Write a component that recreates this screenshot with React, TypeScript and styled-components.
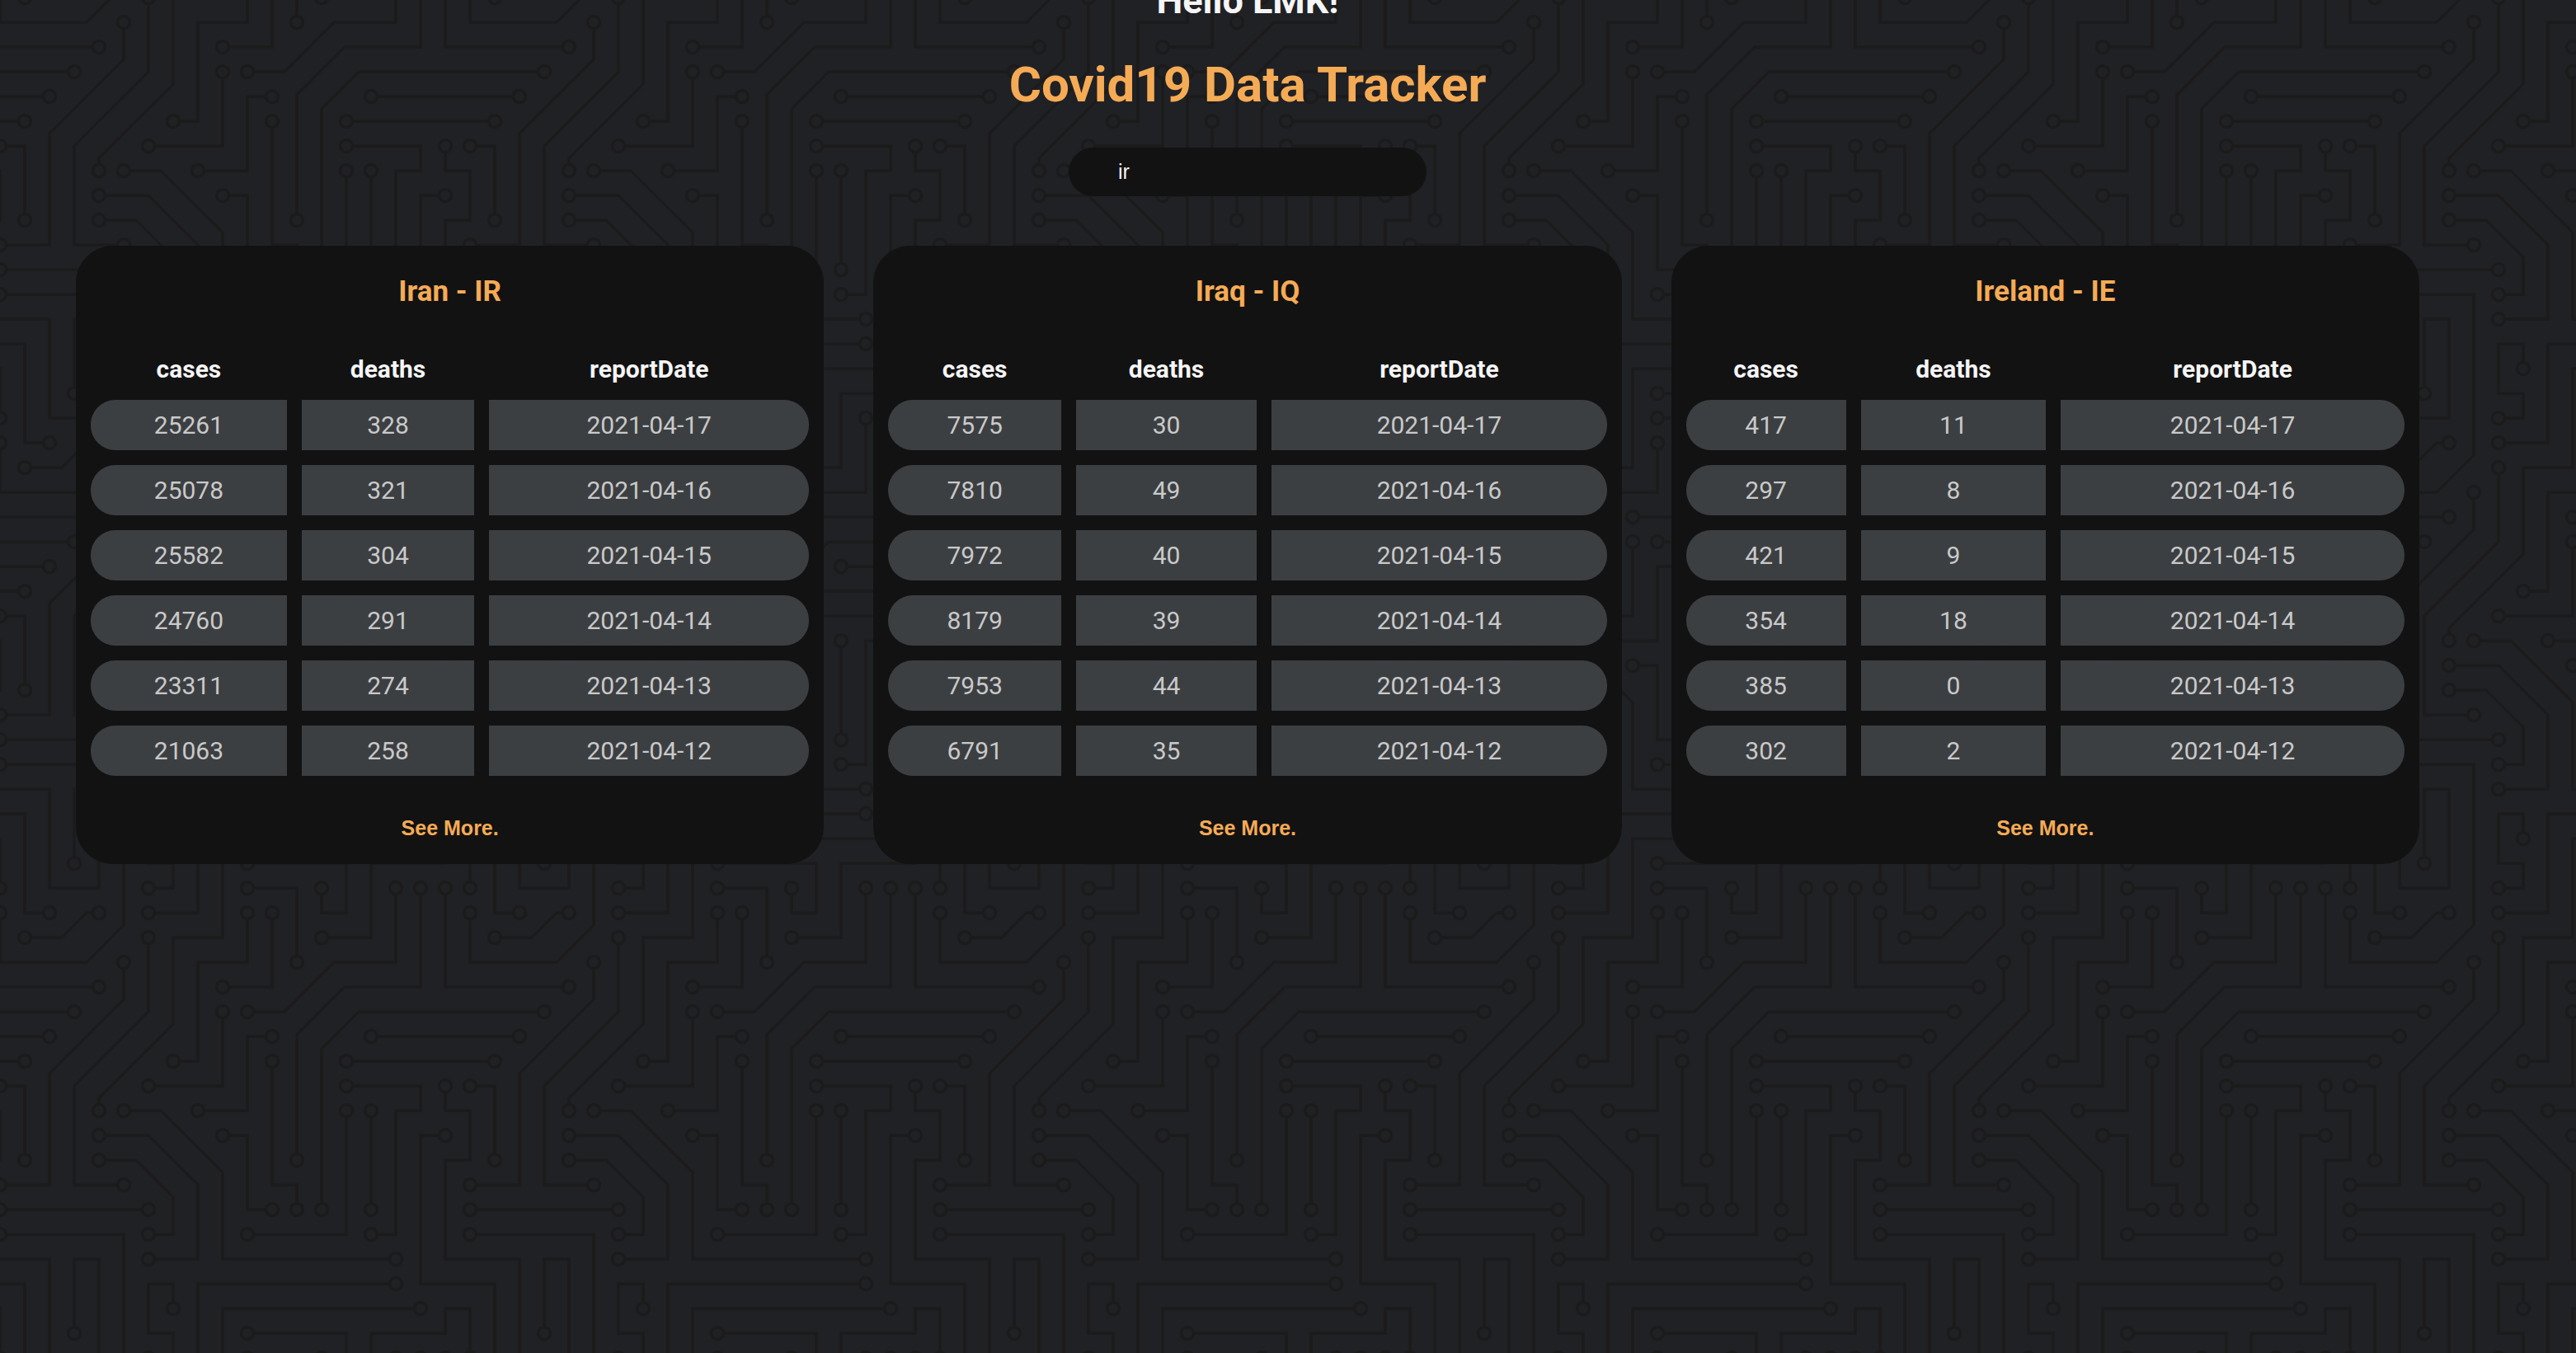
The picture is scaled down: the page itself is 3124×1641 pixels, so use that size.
import React, { useId, useState } from "react";
import styled, { createGlobalStyle } from "styled-components";

type Report = [string, string, string];
type Country = { name: string; code: string; reports: Report[] };
type Point = [number, number];

const countries: Country[] = [
  {
    name: "Iran",
    code: "IR",
    reports: [
      ["25261", "328", "2021-04-17"],
      ["25078", "321", "2021-04-16"],
      ["25582", "304", "2021-04-15"],
      ["24760", "291", "2021-04-14"],
      ["23311", "274", "2021-04-13"],
      ["21063", "258", "2021-04-12"],
    ],
  },
  {
    name: "Iraq",
    code: "IQ",
    reports: [
      ["7575", "30", "2021-04-17"],
      ["7810", "49", "2021-04-16"],
      ["7972", "40", "2021-04-15"],
      ["8179", "39", "2021-04-14"],
      ["7953", "44", "2021-04-13"],
      ["6791", "35", "2021-04-12"],
    ],
  },
  {
    name: "Ireland",
    code: "IE",
    reports: [
      ["417", "11", "2021-04-17"],
      ["297", "8", "2021-04-16"],
      ["421", "9", "2021-04-15"],
      ["354", "18", "2021-04-14"],
      ["385", "0", "2021-04-13"],
      ["302", "2", "2021-04-12"],
    ],
  },
];

/* Circuit traces on a repeating 19 x 19 grid; both ends of a trace carry a ring. */
const PITCH = 30;
const GRID = 19;
const TILE = PITCH * GRID;
const RING = 7.5;

const traces: Point[][] = [
  [[3, 18], [3, 15], [4, 15], [4, 19], [2, 19], [2, 15], [-1, 15], [-1, 11], [0, 11], [0, 9], [-1, 9], [-1, 8]],
  [[2, 20], [1, 20], [1, 16], [-2, 16], [-2, 10], [-1, 10]],
  [[19, 19], [19, 17], [18, 17], [18, 18], [15, 18], [15, 21], [13, 21]],
  [[0, 20], [0, 22], [3.5, 22], [5, 20.5], [5, 14], [0, 14]],
  [[1, 2], [2.5, 2], [3.5, 1], [4, 1]],
  [[6, 19], [7, 19], [7, 18], [6, 18], [6, 16], [7, 16], [7, 17]],
  [[6, 20], [8, 20], [8, 16], [16, 16]],
  [[6, 2], [6, 5], [3, 8], [3, 12], [5, 12]],
  [[5, 3], [5, 4.5], [2, 7.5], [2, 12], [0, 12]],
  [[-1, 0], [-1, 4], [4, 4]],
  [[22, 5], [14.5, 5], [13, 6.5], [13, 13]],
  [[2, 6], [-4, 6]],
  [[1, 7], [-5, 7]],
  [[0, 8], [1, 8], [1, 11]],
  [[0, 13], [6, 13]],
  [[10, 18], [14, 18], [14, 20], [13, 20], [13, 19]],
  [[17, 17], [9, 17], [9, 21], [7, 21], [7, 24.5], [4, 27.5], [4, 28]],
  [[10, 0], [12, 0], [12, 3]],
  [[10, 1], [10, 3], [8, 3], [8, 7], [7, 7]],
  [[11, 1], [11, 4], [9, 4]],
  [[9, 5], [9, 8], [6, 8]],
  [[10, 5], [11.5, 5], [13.5, 3], [16, 3], [16, 0]],
  [[17, 0], [17, 4], [13.93, 4], [12, 5.93], [12, 11]],
  [[11, 6], [10, 6], [10, 9], [8, 9]],
  [[11, 7], [11, 12], [12, 12], [12, 13]],
  [[9, 10], [10, 10], [10, 13], [11, 13]],
  [[14, 8], [17, 8], [17, 9], [16, 9], [16, 14], [15, 14]],
  [[14, 9], [14, 14], [10, 14]],
  [[15, 9], [15, 13]],
  [[5, 9], [6.5, 9], [9, 11.5], [9, 15], [16, 15]],
  [[4, 10], [6, 10], [8, 12], [8, 15], [6, 15]],
  [[4, 11], [5.5, 11], [7, 12.5], [7, 14], [6, 14]],
];

/* Moves a trace's end back along its last segment so that the line stops at the ring. */
const trim = ([x, y]: Point, [nx, ny]: Point): Point => {
  const length = Math.hypot(nx - x, ny - y) * PITCH;
  const share = RING / length;
  return [x + (nx - x) * share, y + (ny - y) * share];
};

const tracePath = (points: Point[]) => {
  const last = points.length - 1;
  const line = points.map((p, i) =>
    i === 0 ? trim(p, points[1]) : i === last ? trim(p, points[last - 1]) : p
  );
  return "M" + line.map(([x, y]) => `${x * PITCH} ${y * PITCH}`).join("L");
};

const ringPath = ([x, y]: Point) =>
  `M${x * PITCH - RING} ${y * PITCH}a${RING} ${RING} 0 1 0 ${RING * 2} 0a${RING} ${RING} 0 1 0 ${-RING * 2} 0z`;

const circuit = traces
  .map((t) => tracePath(t) + ringPath(t[0]) + ringPath(t[t.length - 1]))
  .join("");

const shifts = [-TILE, 0, TILE];

const GlobalStyle = createGlobalStyle`
  *, *::before, *::after { box-sizing: border-box; }
  body {
    margin: 0;
    background: #202125;
    color: #f5f5f5;
    font-family: Roboto, "Liberation Sans", sans-serif;
  }
`;

const Page = styled.div`
  position: relative;
  min-height: 100vh;
  overflow: hidden;
`;

const Backdrop = styled.svg`
  position: absolute;
  inset: 0;
  width: 100%;
  height: 100%;
`;

const Content = styled.main`
  position: relative;
  display: flex;
  flex-direction: column;
  align-items: center;
  margin-top: -25px;
  padding: 0 190px 60px 92px;
`;

const Greeting = styled.h2`
  margin: 0;
  font-size: 45px;
  line-height: 52px;
  font-weight: 700;
`;

const Title = styled.h1`
  margin: 40px 0;
  font-size: 60px;
  line-height: 72px;
  font-weight: 700;
  color: #f5ab55;
`;

const Search = styled.input`
  width: 434px;
  height: 59px;
  padding: 0 60px;
  border: 0;
  border-radius: 30px;
  background: rgba(18, 18, 18, 0.95);
  color: #f5f5f5;
  font: 400 25px/30px "Liberation Sans", Arial, sans-serif;
  outline: none;
`;

const Cards = styled.div`
  display: grid;
  grid-template-columns: repeat(3, minmax(0, 1fr));
  gap: 60px;
  width: 100%;
  margin-top: 60px;
`;

const Card = styled.section`
  display: flex;
  flex-direction: column;
  align-items: center;
  padding-bottom: 21px;
  border-radius: 45px;
  background: rgba(18, 18, 18, 0.95);
`;

const CardTitle = styled.h3`
  margin: 36px 0 38px;
  font-size: 35px;
  line-height: 40px;
  font-weight: 700;
  color: #f5ab55;
`;

const Table = styled.table`
  width: 100%;
  border-collapse: separate;
  border-spacing: 18px;
  text-align: center;
  font-size: 30px;
  line-height: 35px;
`;

const HeadCell = styled.th`
  padding: 0 1px 2px;
  font-weight: 700;
`;

const Cell = styled.td`
  padding: 13px 11px;
  background: rgba(62, 65, 68, 0.97);
  color: #c9c9c9;

  &:first-child { border-radius: 30px 0 0 30px; }
  &:last-child { border-radius: 0 30px 30px 0; }
`;

const More = styled.button`
  margin-top: 22px;
  padding: 8px 20px;
  border: 0;
  background: none;
  color: #f5ab55;
  font: 700 25px/30px "Liberation Sans", Arial, sans-serif;
  cursor: pointer;
`;

function CircuitBackdrop() {
  const id = useId();
  return (
    <Backdrop aria-hidden="true">
      <defs>
        <pattern id={id} y={507} width={TILE} height={TILE} patternUnits="userSpaceOnUse">
          {shifts.map((x) =>
            shifts.map((y) => (
              <path
                key={`${x} ${y}`}
                d={circuit}
                transform={`translate(${x} ${y})`}
                fill="none"
                stroke="#1b1b1c"
                strokeWidth={3.75}
              />
            ))
          )}
        </pattern>
      </defs>
      <rect width="100%" height="100%" fill={`url(#${id})`} />
    </Backdrop>
  );
}

function CountryCard({ country }: { country: Country }) {
  return (
    <Card>
      <CardTitle>
        {country.name} - {country.code}
      </CardTitle>
      <Table>
        <thead>
          <tr>
            <HeadCell scope="col">cases</HeadCell>
            <HeadCell scope="col">deaths</HeadCell>
            <HeadCell scope="col">reportDate</HeadCell>
          </tr>
        </thead>
        <tbody>
          {country.reports.map((report) => (
            <tr key={report[2]}>
              {report.map((value, i) => (
                <Cell key={i}>{value}</Cell>
              ))}
            </tr>
          ))}
        </tbody>
      </Table>
      <More type="button">See More.</More>
    </Card>
  );
}

export default function App() {
  const [query, setQuery] = useState("ir");
  const shown = countries.filter((c) => c.name.toLowerCase().startsWith(query.toLowerCase()));
  return (
    <Page>
      <GlobalStyle />
      <CircuitBackdrop />
      <Content>
        <Greeting>Hello LMK!</Greeting>
        <Title>Covid19 Data Tracker</Title>
        <Search
          type="text"
          aria-label="Country"
          value={query}
          onChange={(e) => setQuery(e.target.value)}
        />
        <Cards>
          {shown.map((country) => (
            <CountryCard key={country.code} country={country} />
          ))}
        </Cards>
      </Content>
    </Page>
  );
}
